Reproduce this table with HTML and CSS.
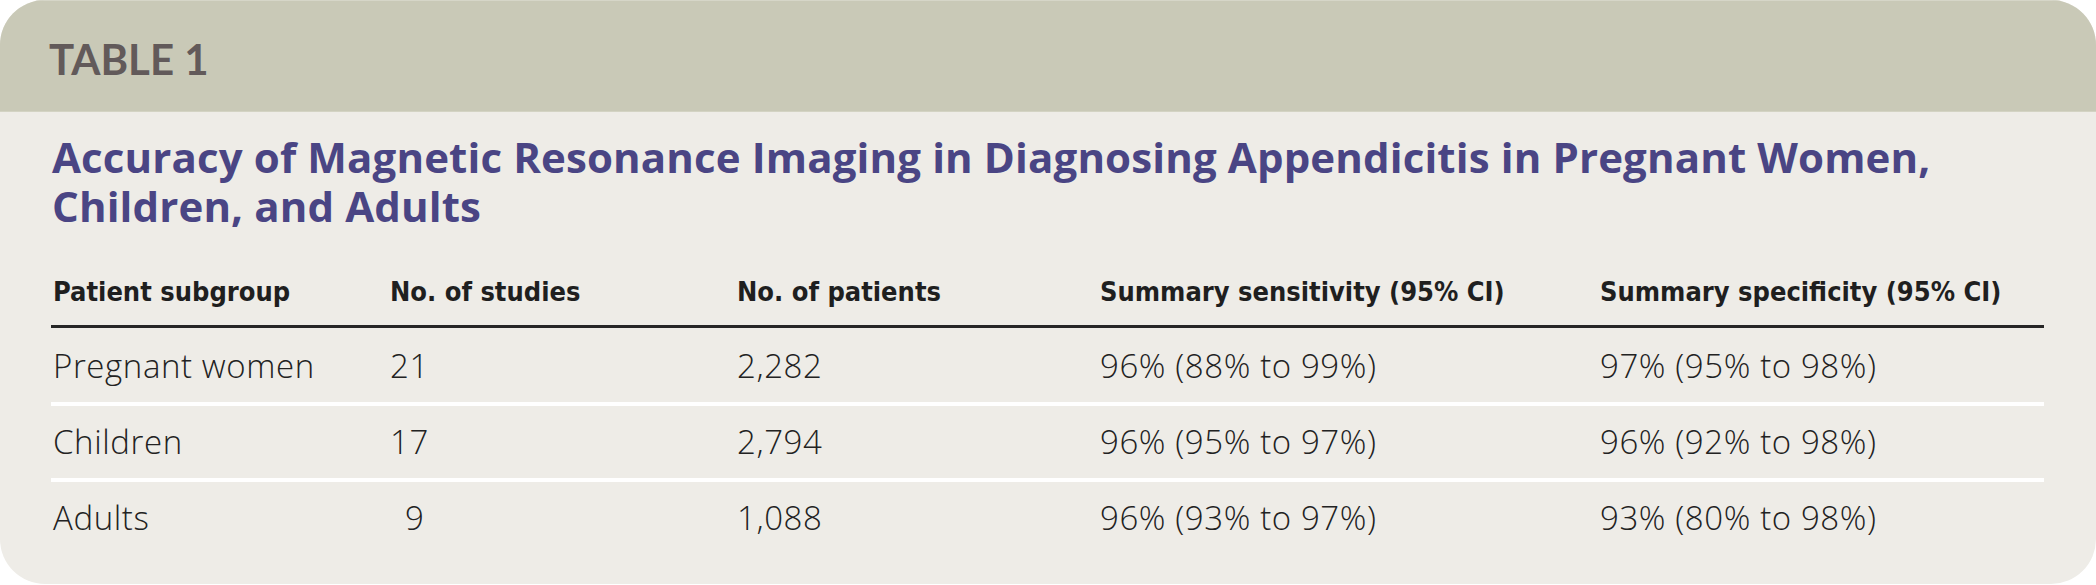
FILE: index.html
```html
<!DOCTYPE html>
<html lang="en">
<head>
<meta charset="utf-8">
<title>Table 1</title>
<link rel="stylesheet" href="styles.css">
</head>
<body>
<div class="card">
  <div class="band"><span class="label">TABLE 1</span></div>
  <div class="content">
    <h1 class="title"><span class="line">Accuracy of Magnetic Resonance Imaging in Diagnosing Appendicitis in Pregnant Women,</span><span class="line">Children, and Adults</span></h1>
    <table class="data">
      <colgroup>
        <col class="c1"><col class="c2"><col class="c3"><col class="c4"><col class="c5">
      </colgroup>
      <thead>
        <tr>
          <th>Patient subgroup</th>
          <th>No. of studies</th>
          <th>No. of patients</th>
          <th>Summary sensitivity (95% CI)</th>
          <th>Summary specificity (95% CI)</th>
        </tr>
      </thead>
      <tbody>
        <tr>
          <td>Pregnant women</td>
          <td>21</td>
          <td>2,282</td>
          <td>96% (88% to 99%)</td>
          <td>97% (95% to 98%)</td>
        </tr>
        <tr>
          <td>Children</td>
          <td>17</td>
          <td>2,794</td>
          <td>96% (95% to 97%)</td>
          <td>96% (92% to 98%)</td>
        </tr>
        <tr>
          <td>Adults</td>
          <td><span class="pad">9</span></td>
          <td>1,088</td>
          <td>96% (93% to 97%)</td>
          <td>93% (80% to 98%)</td>
        </tr>
      </tbody>
    </table>
  </div>
</div>
</body>
</html>
```

FILE: styles.css
```css
html, body {
  margin: 0;
  padding: 0;
  background: #ffffff;
}

.card {
  width: 2096px;
  height: 584px;
  background: #eeece7;
  border-radius: 45px;
  overflow: hidden;
}

.band {
  height: 112px;
  box-sizing: border-box;
  padding: 38px 0 0 49px;
  background: #c9c9b7;
  border-top: 1px solid #d6d6c8;
  border-bottom: 1px solid #d3d3c3;
}

.label {
  display: block;
  font-family: Lato, "Liberation Sans", sans-serif;
  font-weight: 700;
  font-size: 42px;
  line-height: 42px;
  color: #625a5a;
  margin-top: -1px;
}

.content {
  padding: 0 0 0 51px;
}

.title {
  margin: 20px 0 0 0;
  font-family: "Open Sans", Lato, sans-serif;
  font-weight: 700;
  font-size: 42px;
  line-height: 49px;
  letter-spacing: 0.13px;
  color: #4a4584;
  padding-left: 1px;
  font-variant-ligatures: none;
  white-space: nowrap;
}

.title .line {
  display: block;
  height: 49px;
}

.data {
  width: 1993px;
  border-collapse: collapse;
  table-layout: fixed;
}

.c1 { width: 337px; }
.c2 { width: 347px; }
.c3 { width: 363px; }
.c4 { width: 500px; }
.c5 { width: 446px; }

.data th {
  text-align: left;
  font-family: "DejaVu Sans", sans-serif;
  font-stretch: condensed;
  font-weight: 700;
  font-size: 27px;
  line-height: 30px;
  color: #1f1f1f;
  padding: 47px 0 18px 2px;
  border-bottom: 3px solid #262626;
  white-space: nowrap;
}

.data td {
  font-family: "Open Sans", sans-serif;
  font-weight: 300;
  font-size: 33px;
  line-height: 33px;
  letter-spacing: 0.6px;
  color: #222222;
  padding: 19px 0 20px 2px;
  border-bottom: 4px solid #ffffff;
  white-space: nowrap;
}

.data tbody tr:first-child td {
  padding-top: 21px;
}

.data tbody tr:last-child td {
  border-bottom: none;
}

.pad {
  padding-left: 15px;
}
```
